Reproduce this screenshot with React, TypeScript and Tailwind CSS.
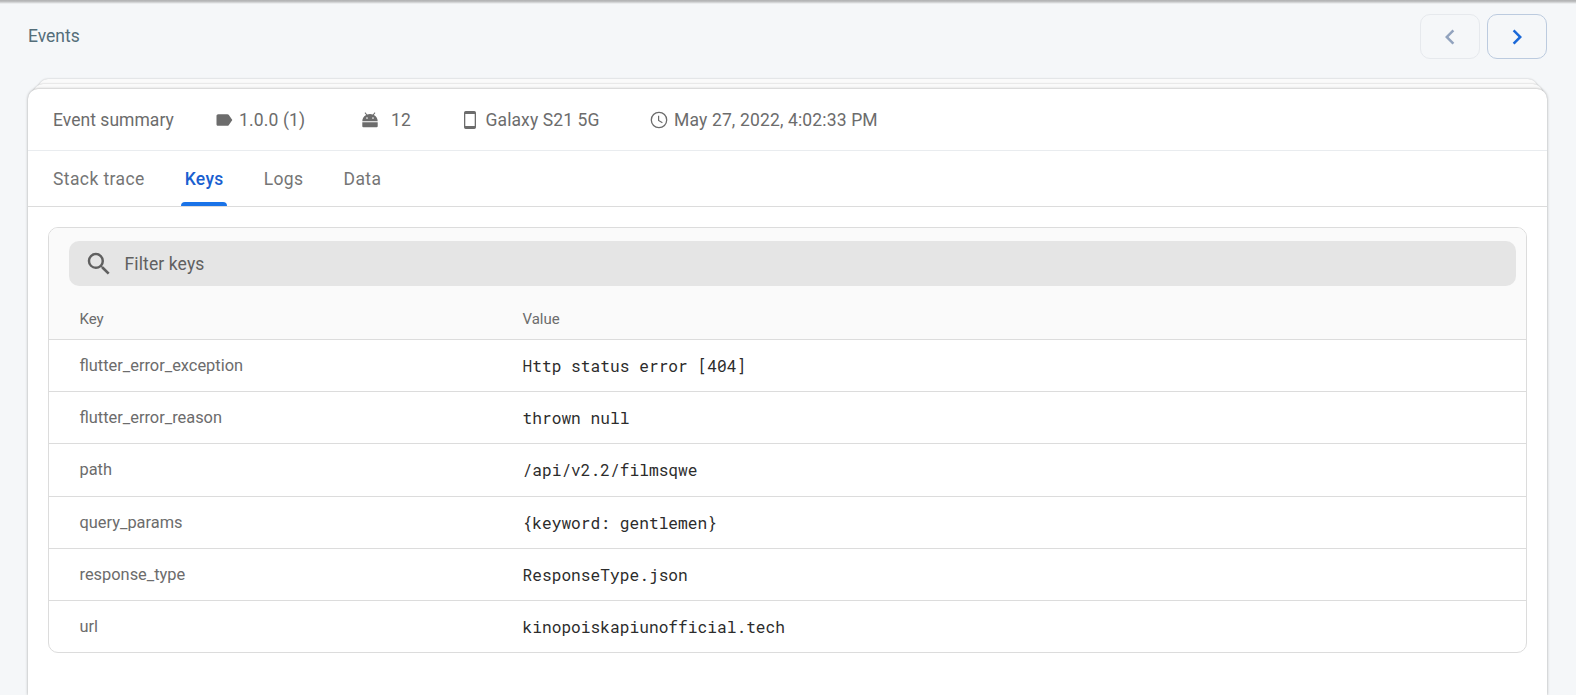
import React from "react";
import { MdChevronLeft, MdChevronRight, MdLabel, MdSearch } from "react-icons/md";

const rows = [
  { name: "flutter_error_exception", value: "Http status error [404]" },
  { name: "flutter_error_reason", value: "thrown null" },
  { name: "path", value: "/api/v2.2/filmsqwe" },
  { name: "query_params", value: "{keyword: gentlemen}" },
  { name: "response_type", value: "ResponseType.json" },
  { name: "url", value: "kinopoiskapiunofficial.tech" },
];

function AndroidIcon() {
  return (
    <svg width="16" height="16" viewBox="0 0 16 16" fill="currentColor" aria-hidden="true">
      <path
        fillRule="evenodd"
        d="M.3 9.200C.3 6.500 1.800 4.100 4.200 2.900L2.600.9l.7-.6 1.800 2.200a8 8 0 0 1 5.800 0L12.700.3l.7.6-1.600 2c2.400 1.200 3.900 3.600 3.900 6.300zM5 5.300a.8.8 0 1 0 0 1.600.8.8 0 0 0 0-1.600zM11 5.300a.8.8 0 1 0 0 1.600.8.8 0 0 0 0-1.600z"
      />
      <path d="M.3 10.300h15.400v3.900a1.100 1.100 0 0 1-1.100 1.100H1.400A1.100 1.100 0 0 1 .3 14.200z" />
    </svg>
  );
}

function PhoneIcon() {
  return (
    <svg width="20" height="20" viewBox="0 0 20 20" fill="currentColor" aria-hidden="true">
      <path
        fillRule="evenodd"
        d="M5.700 1h8.600a1.700 1.700 0 0 1 1.700 1.700v14.600a1.700 1.700 0 0 1-1.700 1.700H5.700A1.700 1.700 0 0 1 4 17.300V2.700A1.700 1.700 0 0 1 5.700 1zM5.300 4v12h9.400V4z"
      />
    </svg>
  );
}

function ClockIcon() {
  return (
    <svg
      width="20"
      height="20"
      viewBox="0 0 20 20"
      fill="none"
      stroke="currentColor"
      strokeWidth="1.300"
      aria-hidden="true"
    >
      <circle cx="10" cy="10" r="7.700" />
      <path d="M9.600 5.800v4.700l3.800 2.300" strokeWidth="1.200" />
    </svg>
  );
}

function Tab({ label, active = false }: { label: string; active?: boolean }) {
  return (
    <div
      className={
        active
          ? "relative flex h-full items-center px-1 pt-0.5 font-medium tracking-[0.3125px] text-[#1a5fd0]"
          : "relative flex h-full items-center px-1 pt-0.5 tracking-[0.4px] text-[#757575]"
      }
    >
      {label}
      {active && <span className="absolute right-px bottom-0 left-0 h-1 rounded-t-[4px] bg-[#1a73e8]" />}
    </div>
  );
}

export default function App() {
  return (
    <div className="flex h-[695px] flex-col overflow-hidden bg-[#f5f7f9] font-['Roboto',sans-serif] text-[#6c6c6c]">
      <div className="h-[5px] shrink-0 bg-linear-to-b from-[#b4b5b6] from-20% to-[#f5f7f9] to-80%" />
      <header className="flex h-[74px] shrink-0 items-start justify-between pr-[29px] pl-7">
        <h1 className="mt-[19px] text-[17.5px] leading-6 text-[#546e7a]">Events</h1>
        <div className="mt-[9px] flex gap-[7px]">
          <button className="flex h-[45px] w-[60px] items-center justify-center rounded-[10px] border border-[#e6e9ed] pr-px text-[#92a3be]">
            <MdChevronLeft size={30} />
          </button>
          <button className="flex h-[45px] w-[60px] items-center justify-center rounded-[10px] border border-[#bccbdf] text-[#1a68d8]">
            <MdChevronRight size={30} />
          </button>
        </div>
      </header>

      <div className="mx-[38px] -mb-[10px] h-[15px] shrink-0 rounded-t-[10px] bg-[#fafafa] shadow-[0_0_2px_rgba(0,0,0,0.25)]" />
      <div className="z-10 mx-[33px] -mb-[10px] h-[15px] shrink-0 rounded-t-[10px] bg-[#fafafa] shadow-[0_0_2px_rgba(0,0,0,0.25)]" />
      <main className="z-20 mr-[29px] ml-7 flex-1 rounded-t-[10px] bg-white shadow-[0_0_3px_rgba(0,0,0,0.35)]">
        <section className="flex h-[62px] items-center border-b border-[#e9ecef] pl-[25px] text-[17.5px] leading-6">
          <h2 className="w-[161px] tracking-[0.04px]">Event summary</h2>
          <div className="flex w-[148px] items-center gap-[5px] tracking-[0.14px]">
            <MdLabel size={20} />
            <span>1.0.0 (1)</span>
          </div>
          <div className="flex w-[98px] items-center gap-[13px] tracking-[0.1px]">
            <AndroidIcon />
            <span>12</span>
          </div>
          <div className="flex w-[189px] items-center gap-[5.5px] tracking-[0.1px]">
            <PhoneIcon />
            <span>Galaxy S21 5G</span>
          </div>
          <div className="flex items-center gap-[5px] tracking-[0.15px]">
            <ClockIcon />
            <span>May 27, 2022, 4:02:33 PM</span>
          </div>
        </section>

        <nav className="flex h-[56px] gap-[32px] border-b border-[#dcdcdc] pl-[21px] text-[17.5px]">
          <Tab label="Stack trace" />
          <Tab label="Keys" active />
          <Tab label="Logs" />
          <Tab label="Data" />
        </nav>

        <section className="mt-[20px] mr-5 ml-5 overflow-hidden rounded-[10px] border border-[#dcdcdc]">
          <div className="border-b border-[#dcdcdc] bg-[#fafafa]">
            <div className="pt-[13px] pr-[10px] pl-5">
              <div className="flex h-[45px] items-center gap-[10.5px] rounded-[10px] bg-[#e5e5e5] pl-[15px] text-[#606060]">
                <MdSearch size={30} />
                <span className="pt-0.5 text-[17.5px] tracking-[0.12px]">Filter keys</span>
              </div>
            </div>
            <div className="flex h-[53px] items-center pt-[13px] pl-[30.5px] text-[15px]">
              <div className="w-[443px]">Key</div>
              <div>Value</div>
            </div>
          </div>
          <div className="divide-y divide-[#dcdcdc]">
            {rows.map((row) => (
              <div
                key={row.name}
                className="flex h-[52.2px] items-center pt-[0.9px] pl-[30.5px] text-[16.4px] leading-6 last:h-[51.2px]"
              >
                <div className="w-[443px]">{row.name}</div>
                <div className="font-['Roboto_Mono','Liberation_Mono',monospace] text-[16.22px] text-[#2c2c2c]">
                  {row.value}
                </div>
              </div>
            ))}
          </div>
        </section>
      </main>
    </div>
  );
}
